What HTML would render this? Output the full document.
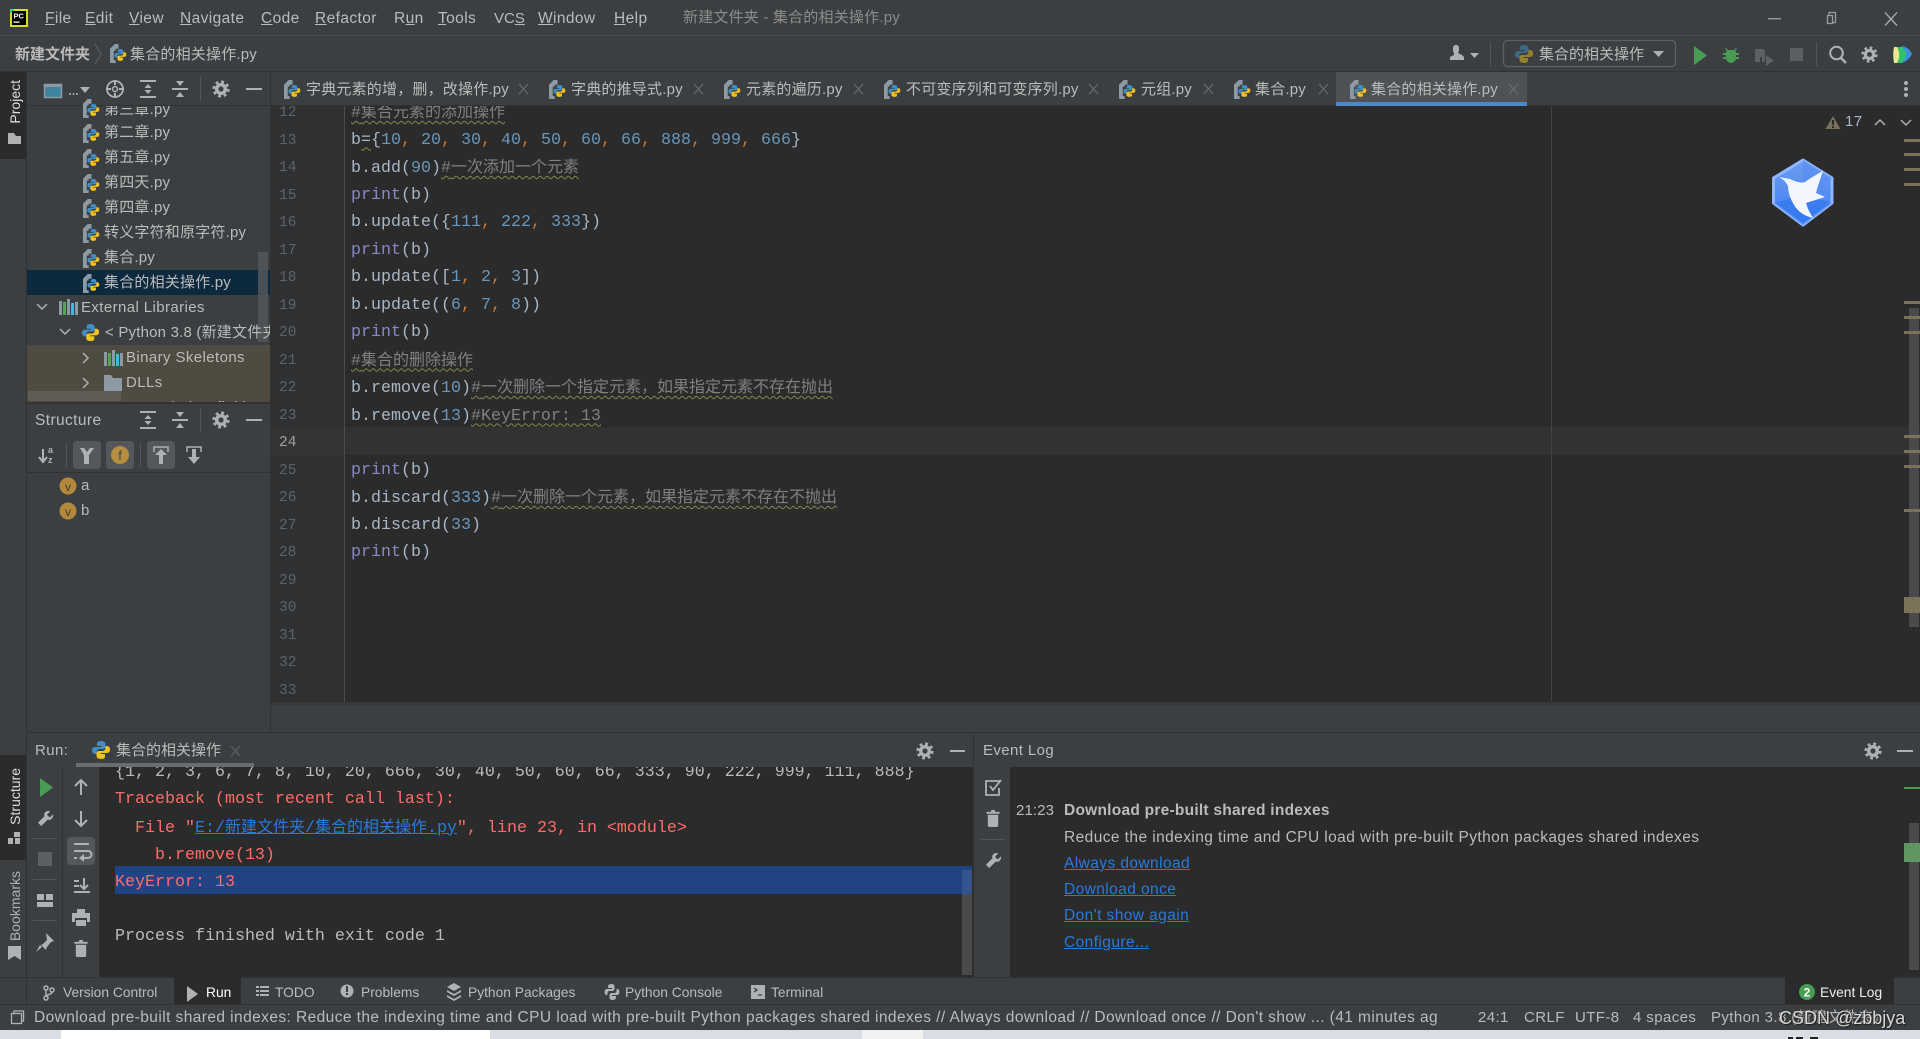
<!DOCTYPE html>
<html><head><meta charset="utf-8"><title>PyCharm</title>
<style>
html,body{margin:0;padding:0;width:1920px;height:1039px;overflow:hidden;background:#3c3f41}
body{position:relative;font-family:"Liberation Sans","Noto Sans CJK SC",sans-serif;font-size:15px;color:#bbb}
.b{position:absolute}
.a{position:absolute;white-space:nowrap;line-height:20px;margin-top:-10px;letter-spacing:.4px}
.u{font-size:15.5px}
.w{font-size:15.5px;letter-spacing:.42px}
.g{font-size:13.8px;letter-spacing:0}
.m{position:absolute;white-space:nowrap;line-height:20px;margin-top:-10px;font-family:"Liberation Mono","Noto Sans CJK SC",monospace;font-size:16.67px;color:#a9b7c6}
.c{color:#808080;text-decoration:underline wavy #85854f 1px;text-underline-offset:3px;font-size:16px}
.c i{font-style:normal;font-size:16.67px}
.n{color:#6897bb}.o{color:#cc7832}.p{color:#8888c6}
.l{font-family:"Liberation Mono",monospace;font-size:14.5px;color:#606366;left:279px;position:absolute;line-height:20px;margin-top:-10px}
.t{font-size:15px;letter-spacing:.2px}
.r{font-family:"Liberation Mono","Noto Sans CJK SC",monospace;font-size:16.67px;color:#ff6b68;position:absolute;white-space:pre;line-height:20px;margin-top:-10px}
.lk{color:#287bde;text-decoration:underline}
.lk i{font-style:normal;font-size:16px}
.e{left:1064px;color:#287bde;text-decoration:underline;font-size:15.5px;letter-spacing:.42px}
.v{position:absolute;writing-mode:vertical-rl;transform:rotate(180deg);white-space:nowrap;font-size:14px;line-height:16px}
svg{position:absolute;left:0;top:0}
</style></head><body>

<!-- panels -->
<div class="b" style="left:0;top:35px;width:1920px;height:1px;background:#4c4f51"></div>
<div class="b" style="left:0;top:71px;width:1920px;height:1px;background:#323232"></div>
<div class="b" style="left:0;top:105px;width:1920px;height:1px;background:#323232"></div>
<div class="b" style="left:0;top:72px;width:27px;height:87px;background:#2b2b2b"></div>
<div class="b" style="left:0;top:755px;width:27px;height:105px;background:#2b2b2b"></div>
<div class="b" style="left:26px;top:72px;width:1px;height:933px;background:#323232"></div>
<div class="b" style="left:270px;top:72px;width:1px;height:660px;background:#323232"></div>
<div class="b" style="left:1336px;top:72px;width:191px;height:34px;background:#4e5254"></div>
<div class="b" style="left:1336px;top:102px;width:191px;height:4px;background:#4a88c7"></div>
<div class="b" style="left:27px;top:270px;width:243px;height:25px;background:#0d293e"></div>
<div class="b" style="left:27px;top:345px;width:243px;height:57px;background:#4f4b41"></div>
<div class="b" style="left:28px;top:391px;width:93px;height:10px;background:#5f5c53"></div>
<div class="b" style="left:258px;top:252px;width:10px;height:90px;background:#53575a;opacity:.85"></div>
<div class="b" style="left:27px;top:402px;width:243px;height:2px;background:#323232"></div>
<div class="b" style="left:27px;top:472px;width:243px;height:1px;background:#323232"></div>

<!-- editor -->
<div class="b" style="left:271px;top:106px;width:1649px;height:596px;background:#2b2b2b"></div>
<div class="b" style="left:271px;top:106px;width:73px;height:596px;background:#2f3031"></div>
<div class="b" style="left:344px;top:106px;width:1px;height:596px;background:#4a4c4e"></div>
<div class="b" style="left:345px;top:427px;width:1575px;height:28px;background:#323232"></div>
<div class="b" style="left:271px;top:427px;width:73px;height:28px;background:#333435"></div>
<div class="b" style="left:1551px;top:106px;width:1px;height:596px;background:#444"></div>
<div class="b" style="left:271px;top:702px;width:1649px;height:3px;background:#373839"></div>
<div class="b" style="left:27px;top:732px;width:1893px;height:1px;background:#323232"></div>

<div class="b" style="left:0;top:106px;width:1920px;height:596px;overflow:hidden">
<div class="b" style="left:0;top:1px;width:1920px;height:596px">
<div class="l" style="top:6px">12</div><div class="l" style="top:33.5px">13</div><div class="l" style="top:61px">14</div><div class="l" style="top:88.5px">15</div><div class="l" style="top:116px">16</div><div class="l" style="top:143.5px">17</div><div class="l" style="top:171px">18</div><div class="l" style="top:198.5px">19</div><div class="l" style="top:226px">20</div><div class="l" style="top:253.5px">21</div><div class="l" style="top:281px">22</div><div class="l" style="top:308.5px">23</div><div class="l" style="top:336px;color:#a4a3a3">24</div><div class="l" style="top:363.5px">25</div><div class="l" style="top:391px">26</div><div class="l" style="top:418.5px">27</div><div class="l" style="top:446px">28</div><div class="l" style="top:473.5px">29</div><div class="l" style="top:501px">30</div><div class="l" style="top:528.5px">31</div><div class="l" style="top:556px">32</div><div class="l" style="top:583.5px">33</div>
<div class="m" style="left:351px;top:6px"><span class="c"><i>#</i>集合元素的添加操作</span></div>
<div class="m" style="left:351px;top:33.5px">b<span style="text-decoration:underline wavy #85854f 1px;text-underline-offset:3px">=</span>{<span class="n">10</span><span class="o">,</span> <span class="n">20</span><span class="o">,</span> <span class="n">30</span><span class="o">,</span> <span class="n">40</span><span class="o">,</span> <span class="n">50</span><span class="o">,</span> <span class="n">60</span><span class="o">,</span> <span class="n">66</span><span class="o">,</span> <span class="n">888</span><span class="o">,</span> <span class="n">999</span><span class="o">,</span> <span class="n">666</span>}</div>
<div class="m" style="left:351px;top:61px">b.add(<span class="n">90</span>)<span class="c"><i>#</i>一次添加一个元素</span></div>
<div class="m" style="left:351px;top:88.5px"><span class="p">print</span>(b)</div>
<div class="m" style="left:351px;top:116px">b.update({<span class="n">111</span><span class="o">,</span> <span class="n">222</span><span class="o">,</span> <span class="n">333</span>})</div>
<div class="m" style="left:351px;top:143.5px"><span class="p">print</span>(b)</div>
<div class="m" style="left:351px;top:171px">b.update([<span class="n">1</span><span class="o">,</span> <span class="n">2</span><span class="o">,</span> <span class="n">3</span>])</div>
<div class="m" style="left:351px;top:198.5px">b.update((<span class="n">6</span><span class="o">,</span> <span class="n">7</span><span class="o">,</span> <span class="n">8</span>))</div>
<div class="m" style="left:351px;top:226px"><span class="p">print</span>(b)</div>
<div class="m" style="left:351px;top:253.5px"><span class="c"><i>#</i>集合的删除操作</span></div>
<div class="m" style="left:351px;top:281px">b.remove(<span class="n">10</span>)<span class="c"><i>#</i>一次删除一个指定元素，如果指定元素不存在抛出</span></div>
<div class="m" style="left:351px;top:308.5px">b.remove(<span class="n">13</span>)<span class="c"><i>#KeyError: 13</i></span></div>
<div class="m" style="left:351px;top:363.5px"><span class="p">print</span>(b)</div>
<div class="m" style="left:351px;top:391px">b.discard(<span class="n">333</span>)<span class="c"><i>#</i>一次删除一个元素，如果指定元素不存在不抛出</span></div>
<div class="m" style="left:351px;top:418.5px">b.discard(<span class="n">33</span>)</div>
<div class="m" style="left:351px;top:446px"><span class="p">print</span>(b)</div>
</div>
</div>

<!-- editor stripe -->
<div class="b" style="left:1909px;top:308px;width:10px;height:319px;background:#4a4a4a"></div>
<div class="b" style="left:1904px;top:139px;width:16px;height:3px;background:#7c7259"></div>
<div class="b" style="left:1904px;top:153px;width:16px;height:3px;background:#7c7259"></div>
<div class="b" style="left:1904px;top:168px;width:16px;height:3px;background:#7c7259"></div>
<div class="b" style="left:1904px;top:183px;width:16px;height:3px;background:#7c7259"></div>
<div class="b" style="left:1904px;top:301px;width:16px;height:3px;background:#7c7259"></div>
<div class="b" style="left:1904px;top:316px;width:16px;height:3px;background:#7c7259"></div>
<div class="b" style="left:1904px;top:331px;width:16px;height:3px;background:#7c7259"></div>
<div class="b" style="left:1904px;top:435px;width:16px;height:3px;background:#7c7259"></div>
<div class="b" style="left:1904px;top:450px;width:16px;height:3px;background:#7c7259"></div>
<div class="b" style="left:1904px;top:465px;width:16px;height:3px;background:#7c7259"></div>
<div class="b" style="left:1904px;top:509px;width:16px;height:3px;background:#7c7259"></div>
<div class="b" style="left:1904px;top:597px;width:16px;height:16px;background:#7c7259"></div>

<!-- bottom panels -->
<div class="b" style="left:100px;top:767px;width:873px;height:210px;background:#2b2b2b"></div>
<div class="b" style="left:62px;top:767px;width:1px;height:210px;background:#323232"></div>
<div class="b" style="left:99px;top:767px;width:1px;height:210px;background:#323232"></div>
<div class="b" style="left:115px;top:866px;width:857px;height:28px;background:#214283"></div>
<div class="b" style="left:962px;top:870px;width:10px;height:105px;background:#4a4a4a"></div>
<div class="b" style="left:962px;top:870px;width:10px;height:24px;background:#33548f"></div>
<div class="b" style="left:973px;top:733px;width:1px;height:244px;background:#323232"></div>
<div class="b" style="left:1010px;top:767px;width:910px;height:210px;background:#2b2b2b"></div>
<div class="b" style="left:76px;top:763px;width:178px;height:4px;background:#6a6d70"></div>
<div class="b" style="left:1909px;top:823px;width:10px;height:147px;background:#4a4a4a"></div>
<div class="b" style="left:1904px;top:787px;width:16px;height:2px;background:#499c54"></div>
<div class="b" style="left:1904px;top:843px;width:16px;height:19px;background:#60965f"></div>
<div class="b" style="left:0;top:977px;width:1920px;height:1px;background:#323232"></div>
<div class="b" style="left:174px;top:977px;width:67px;height:27px;background:#2b2b2b"></div>
<div class="b" style="left:1785px;top:977px;width:109px;height:27px;background:#2b2b2b"></div>
<div class="b" style="left:0;top:1004px;width:1920px;height:1px;background:#323232"></div>
<div class="b" style="left:0;top:1030px;width:1920px;height:9px;background:#d9dde4"></div>
<div class="b" style="left:61px;top:1030px;width:429px;height:9px;background:#fff"></div>
<div class="b" style="left:862px;top:1030px;width:61px;height:9px;background:#f0f1f3"></div>
<div class="b" style="left:1788px;top:1037px;width:5px;height:2px;background:#222"></div>
<div class="b" style="left:1796px;top:1037px;width:7px;height:2px;background:#222"></div>
<div class="b" style="left:1810px;top:1037px;width:8px;height:2px;background:#222"></div>
<div class="b" style="left:67px;top:837px;width:28px;height:28px;background:#55585a;border-radius:4px"></div>
<div class="b" style="left:73px;top:441px;width:28px;height:28px;background:#55585a;border-radius:4px"></div>
<div class="b" style="left:106px;top:441px;width:28px;height:28px;background:#55585a;border-radius:4px"></div>
<div class="b" style="left:147px;top:441px;width:28px;height:28px;background:#55585a;border-radius:4px"></div>

<!-- icons -->
<svg width="1920" height="1039" viewBox="0 0 1920 1039">
<defs>
<symbol id="py" viewBox="0 0 20 20"><path fill="#3f8fc4" d="M10 1C6 1 6 2.7 6 4v2h4.2v1H4.2C2 7 1 8.5 1 10.5S2 14 4 14h1.6v-2.3c0-1.6 1.2-2.7 2.8-2.7h4c1.2 0 2.1-1 2.1-2.2V4c0-1.6-1.6-3-4.5-3z"/><path fill="#f2c31c" d="M10 19c4 0 4-1.700 4-3v-2H9.800v-1h6C18 13 19 11.500 19 9.500S18 6 16 6h-1.600v2.300c0 1.600-1.200 2.700-2.800 2.700h-4c-1.200 0-2.100 1-2.100 2.200V16c0 1.600 1.600 3 4.500 3z"/></symbol>
<symbol id="pf" viewBox="0 0 18 20"><path fill="#8d9aa3" d="M5 0h4v5H6v2H4v10h2v3H0V5z"/><use href="#py" x="4" y="4" width="14" height="15"/></symbol>
<symbol id="gear" viewBox="0 0 18 18"><circle cx="9" cy="9" r="6" fill="#afb1b3"/><circle cx="9" cy="9" r="7.200" fill="none" stroke="#afb1b3" stroke-width="2.800" stroke-dasharray="2.800 2.850"/><circle cx="9" cy="9" r="2.600" fill="#3c3f41"/></symbol>
<symbol id="exp" viewBox="0 0 16 18"><path fill="#afb1b3" d="M0 0h16v2H0zM0 16h16v2H0zM8 4l3.500 4h-7zM8 14l-3.500-4h7z"/></symbol>
<symbol id="col" viewBox="0 0 16 18"><path fill="#afb1b3" d="M0 8h16v2H0zM4 1h8l-4 5zM4 17h8l-4-5z"/></symbol>
<symbol id="wr" viewBox="0 0 18 18"><path fill="#afb1b3" d="M17 4.500 13.500 8 10.500 5 14 1.500c-2.500-1-5 0-6 2-.5 1-.5 2.200-.2 3.200L1 13.500 4.500 17l6.800-6.800c1 .3 2.200.3 3.200-.2 2-1 3-3.500 2.500-5.500z"/></symbol>
<symbol id="tr" viewBox="0 0 14 18"><path fill="#afb1b3" d="M5 0h4v2h5v2H0V2h5zM1.500 5h11v12l-1 1h-9l-1-1z"/></symbol>
</defs>

<!-- app logo -->
<rect x="10" y="9" width="18" height="18" fill="#d5df21"/><rect x="10" y="9" width="4" height="4" fill="#3cd47a"/>
<rect x="12" y="11" width="14" height="14" fill="#000"/>
<text x="13.500" y="18.500" font-family="Liberation Sans" font-size="7.500" font-weight="bold" fill="#fff">PC</text>
<rect x="13.500" y="21.500" width="6" height="1.300" fill="#fff"/>

<!-- window controls -->
<rect x="1768" y="18" width="13" height="1.400" fill="#999"/>
<path fill="none" stroke="#999" stroke-width="1.300" d="M1829 15.500v-3h6.500v10h-3M1827.500 15.500h5v8h-5z"/>
<path fill="none" stroke="#aaa" stroke-width="1.300" d="M1885 12.500l12 13M1897 12.500l-12 13"/>

<!-- breadcrumb -->
<path fill="none" stroke="#5a5d5f" stroke-width="1.200" d="M95 44l6 10-6 10"/>
<use href="#pf" x="110" y="44" width="17" height="19"/>

<!-- right toolbar -->
<path fill="#afb1b3" d="M1450 60v-3l4-2v-2c-1-1-1-2-1-4 0-3 1-4 3-4s3 1 3 4c0 1 0 2-.5 3l-.5 1 4 2 2 2v3z"/>
<path fill="#afb1b3" d="M1470 53h9l-4.500 5z"/>
<rect x="1490" y="42" width="1" height="24" fill="#515658"/>
<rect x="1503.500" y="40.500" width="172" height="26" rx="4" fill="none" stroke="#5e6060" stroke-width="1.300"/>
<use href="#py" x="1514" y="44" width="20" height="20" opacity=".5"/>
<path fill="#afb1b3" d="M1653 51h11l-5.500 6z"/>
<path fill="#499c54" d="M1694 46v19l13-9.500z"/>
<path fill="#499c54" d="M1726 48l2 2h6l2-2 1 1-2 2 1 1v1h3v2h-3v2h3v2h-3l-1 2-3 2h-2l-3-2-1-2h-3v-2h3v-2h-3v-2h3v-1l1-1-2-2z"/>
<path fill="#5d6062" d="M1755 49h8l2 2v11h-3v-5h-2v5h-5z"/><path fill="#5d6062" d="M1766 55v11l8-5.500z"/>
<rect x="1790" y="48" width="13" height="13" fill="#5d6062"/>
<rect x="1816" y="42" width="1" height="24" fill="#515658"/>
<circle cx="1836.500" cy="53" r="6.300" fill="none" stroke="#afb1b3" stroke-width="2"/><path stroke="#afb1b3" stroke-width="2.400" d="M1841 58l5 5"/>
<use href="#gear" x="1861" y="46" width="17" height="17"/>
<path fill="#3d8fe0" d="M1902 46c5 1 8 4 10 8-2 4-5 7-10 9z"/><path fill="#30c36b" d="M1897 47h5c3 3 4 5 4 7 0 3-2 6-4 9h-5c2-5 3-11 0-16z"/><path fill="#e8e890" d="M1894 47h3c3 5 3 11 0 16h-3c-1-5-1-11 0-16z"/>

<!-- tabs -->
<use href="#pf" x="284" y="80" width="17" height="19"/><use href="#pf" x="549" y="80" width="17" height="19"/><use href="#pf" x="724" y="80" width="17" height="19"/><use href="#pf" x="884" y="80" width="17" height="19"/><use href="#pf" x="1119" y="80" width="17" height="19"/><use href="#pf" x="1234" y="80" width="17" height="19"/><use href="#pf" x="1350" y="80" width="17" height="19"/>
<g fill="none" stroke="#6a6c6e" stroke-width="1.200"><path d="M519 84l9 10M528 84l-9 10M694 84l9 10M703 84l-9 10M854 84l9 10M863 84l-9 10M1089 84l9 10M1098 84l-9 10M1204 84l9 10M1213 84l-9 10M1319 84l9 10M1328 84l-9 10M1509 84l9 10M1518 84l-9 10"/></g>
<circle cx="1906" cy="83" r="2" fill="#afb1b3"/><circle cx="1906" cy="89" r="2" fill="#afb1b3"/><circle cx="1906" cy="95" r="2" fill="#afb1b3"/>

<!-- left strip icons -->
<path fill="#afb1b3" d="M8 133h6l2 3h5v8H8z"/>
<path fill="#afb1b3" d="M8 838h5v6H8zM15 838h5v6h-5zM14 832h6v5h-6z"/>
<path fill="#afb1b3" d="M8 946h13v14l-6.500-4L8 960z"/>

<!-- project toolbar -->
<rect x="44.500" y="84.500" width="17" height="13" fill="#3e86a0" stroke="#8d9aa3" stroke-width="1.500"/>
<rect x="44" y="84" width="18" height="3" fill="#8d9aa3"/>
<g fill="#afb1b3"><circle cx="70" cy="94" r="1"/><circle cx="73.500" cy="94" r="1"/><circle cx="77" cy="94" r="1"/><path d="M80 87h10l-5 6z"/></g>
<circle cx="115" cy="89" r="8" fill="none" stroke="#afb1b3" stroke-width="1.800"/><circle cx="115" cy="89" r="2.500" fill="none" stroke="#afb1b3" stroke-width="1.500"/><path stroke="#afb1b3" stroke-width="2" d="M115 80v5M115 93v5M106 89h5M119 89h5"/>
<use href="#exp" x="140" y="80" width="16" height="18"/><use href="#col" x="172" y="80" width="16" height="18"/>
<rect x="200" y="77" width="1" height="24" fill="#515658"/>
<use href="#gear" x="212" y="80" width="18" height="18"/>
<rect x="246" y="88" width="16" height="2" fill="#afb1b3"/>

<!-- tree -->
<use href="#pf" x="83" y="99" width="17" height="19"/><use href="#pf" x="83" y="124" width="17" height="19"/><use href="#pf" x="83" y="149" width="17" height="19"/><use href="#pf" x="83" y="174" width="17" height="19"/><use href="#pf" x="83" y="199" width="17" height="19"/><use href="#pf" x="83" y="224" width="17" height="19"/><use href="#pf" x="83" y="249" width="17" height="19"/><use href="#pf" x="83" y="274" width="17" height="19"/>
<g fill="none" stroke="#afb1b3" stroke-width="1.500"><path d="M37 304l5 5 5-5M60 329l5 5 5-5M83 353l5 5-5 5M83 378l5 5-5 5"/></g>
<g><rect x="59" y="301" width="3" height="14" fill="#8d9aa3"/><rect x="63" y="302" width="3" height="13" fill="#55a556"/><rect x="67" y="299" width="3" height="16" fill="#8d9aa3"/><rect x="71" y="303" width="3" height="12" fill="#40b6e0"/><rect x="75" y="302" width="3" height="13" fill="#8d9aa3"/></g>
<use href="#py" x="81" y="323" width="19" height="19"/>
<g><rect x="104" y="352" width="3" height="14" fill="#8d9aa3"/><rect x="108" y="353" width="3" height="13" fill="#55a556"/><rect x="112" y="350" width="3" height="16" fill="#8d9aa3"/><rect x="116" y="354" width="3" height="12" fill="#40b6e0"/><rect x="120" y="353" width="3" height="13" fill="#8d9aa3"/></g>
<path fill="#8d9aa3" d="M104 375h7l2 3h9v13h-18z"/>

<!-- structure -->
<use href="#exp" x="140" y="411" width="16" height="18"/><use href="#col" x="172" y="411" width="16" height="18"/>
<rect x="200" y="408" width="1" height="24" fill="#515658"/>
<use href="#gear" x="212" y="411" width="18" height="18"/>
<rect x="246" y="419" width="16" height="2" fill="#afb1b3"/>
<path fill="none" stroke="#afb1b3" stroke-width="2" d="M43 449v12M39 457l4 5 4-5"/><text x="48" y="453" font-family="Liberation Sans" font-size="9" font-weight="bold" fill="#afb1b3">a</text><text x="48" y="463" font-family="Liberation Sans" font-size="9" font-weight="bold" fill="#afb1b3">z</text>
<rect x="66" y="443" width="1" height="24" fill="#515658"/><rect x="140" y="443" width="1" height="24" fill="#515658"/>
<path fill="#afb1b3" d="M80 448h4l3 4 3-4h4l-5 7v9h-5v-9z"/>
<circle cx="120" cy="455" r="9" fill="#b58e3f"/><text x="120" y="460" text-anchor="middle" font-family="Liberation Sans" font-size="13" fill="#3c3f41">f</text>
<path fill="none" stroke="#afb1b3" stroke-width="1.500" d="M154 452v-5h14v5"/><path fill="#afb1b3" d="M161 449l6 6h-4v9h-4v-9h-4z"/>
<path fill="none" stroke="#afb1b3" stroke-width="1.500" d="M187 452v-5h14v5"/><path fill="#afb1b3" d="M192 449h4v8h4l-6 7-6-7h4z"/>
<circle cx="68" cy="486" r="8.500" fill="#b4873a"/><text x="68" y="491" text-anchor="middle" font-family="Liberation Sans" font-size="12" fill="#3c3f41">v</text>
<circle cx="68" cy="511" r="8.500" fill="#b4873a"/><text x="68" y="516" text-anchor="middle" font-family="Liberation Sans" font-size="12" fill="#3c3f41">v</text>

<!-- warning -->
<path fill="#7a7059" d="M1833 116l7.500 13h-15z"/><rect x="1832" y="120" width="2" height="5" fill="#2b2b2b"/><rect x="1832" y="126" width="2" height="2" fill="#2b2b2b"/>
<path fill="none" stroke="#afb1b3" stroke-width="1.500" d="M1875 125l5-5 5 5M1901 120l5 5 5-5"/>

<!-- bird logo -->
<defs><linearGradient id="bl" x1="0" y1="0" x2="0" y2="1"><stop offset="0" stop-color="#6d9cf0"/><stop offset="1" stop-color="#3d80f5"/></linearGradient></defs>
<path fill="url(#bl)" stroke="#8fb6ff" stroke-width="3" stroke-linejoin="round" d="M1803 160l29 18v25l-29 22-29.500-22v-25z"/>
<path fill="#5a8ff2" d="M1803 160l29 18-29 18z" opacity=".7"/>
<path fill="#2f74ee" d="M1774 203l29-8 29 8-29 22z" opacity=".6"/>
<path fill="#f2f6ff" d="M1779 177L1790 179Q1800 184 1805 182Q1815 175 1823 171Q1818 185 1816 193L1825 197L1806 203Q1808 210 1813 218Q1800 215 1794 205Q1788 195 1788 186Q1785 180 1779 177Z"/>

<!-- run header -->
<use href="#py" x="91" y="740" width="20" height="20"/>
<path fill="none" stroke="#5f6163" stroke-width="1.200" d="M231 746l9 10M240 746l-9 10"/>
<use href="#gear" x="916" y="742" width="18" height="18"/>
<rect x="950" y="750" width="15" height="2" fill="#afb1b3"/>

<!-- run toolbar col1 -->
<path fill="#499c54" d="M40 778v19l13-9.500z"/>
<use href="#wr" x="37" y="810" width="17" height="17"/>
<rect x="33" y="838" width="24" height="1" fill="#515658"/><rect x="33" y="879" width="24" height="1" fill="#515658"/><rect x="33" y="920" width="24" height="1" fill="#515658"/>
<rect x="38" y="852" width="14" height="14" fill="#5d6062"/>
<path fill="#afb1b3" d="M37 894h7v6h-7zM46 894h7v6h-7zM37 902h16v5H37z"/>
<path fill="#afb1b3" d="M46 933l8 8-3 1-4 5-1 3-5-5 2-1 4-4zM40 945l2 2-6 5z"/>

<!-- run toolbar col2 -->
<path fill="none" stroke="#afb1b3" stroke-width="2" d="M81 795v-15M75 786l6-6 6 6M81 811v15M75 820l6 6 6-6"/>
<path fill="none" stroke="#afb1b3" stroke-width="2" d="M74 844h15M74 851h14a3 3 0 0 1 0 7h-6"/><path fill="#afb1b3" d="M84 854v8l-5-4zM74 857h3v2h-3z"/>
<path fill="#afb1b3" d="M74 880h5v2h-5zM74 885h5v2h-5zM74 891h16v2H74z"/><path fill="none" stroke="#afb1b3" stroke-width="2" d="M84 878v11M80 885l4 4 4-4"/>
<path fill="#afb1b3" d="M77 909h8v4h5v9h-3v-4H75v4h-3v-9h5zM76 920h10v6H76z"/>
<use href="#tr" x="74" y="940" width="14" height="17"/>

<!-- event log -->
<use href="#gear" x="1864" y="742" width="18" height="18"/>
<rect x="1897" y="750" width="16" height="2" fill="#afb1b3"/>
<path fill="none" stroke="#afb1b3" stroke-width="1.800" d="M1001 781h-15v14h13v-7"/><path fill="none" stroke="#afb1b3" stroke-width="1.800" d="M990 786l3 4 8-10"/>
<use href="#tr" x="986" y="810" width="14" height="17"/>
<rect x="981" y="839" width="24" height="1" fill="#515658"/>
<use href="#wr" x="985" y="852" width="17" height="17"/>

<!-- tool window bar -->
<g fill="none" stroke="#afb1b3" stroke-width="1.500"><circle cx="46" cy="988" r="2"/><circle cx="46" cy="998" r="2"/><circle cx="52" cy="990" r="2"/><path d="M46 990v6M52 992c0 3-6 2-6 5"/></g>
<path fill="#afb1b3" d="M187 986v16l11-8z"/>
<path fill="#afb1b3" d="M256 986h3v2h-3zM260 986h9v2h-9zM256 990h3v2h-3zM260 990h9v2h-9zM256 994h3v2h-3zM260 994h9v2h-9z"/>
<circle cx="347" cy="991" r="6.500" fill="#afb1b3"/><rect x="346" y="986" width="2" height="6" fill="#3c3f41"/><rect x="346" y="993" width="2" height="2" fill="#3c3f41"/>
<path fill="#afb1b3" d="M454 983l7 4-7 4-7-4zM447 990l7 4 7-4v2l-7 4-7-4zM447 995l7 4 7-4v2l-7 4-7-4z"/>
<path fill="#afb1b3" d="M612 984c-3 0-4 1-4 3v1h4v1h-5c-2 0-2.500 2-2.500 3s.5 3 2 3h1v-2c0-1 1-2 2-2h3c1 0 2-1 2-2v-2c0-2-1-3-2.500-3zM612 1000c3 0 4-1 4-3v-1h-4v-1h5c2 0 2.500-2 2.500-3s-.5-3-2-3h-1v2c0 1-1 2-2 2h-3c-1 0-2 1-2 2v2c0 2 1 3 2.500 3z"/>
<rect x="751" y="985" width="14" height="14" fill="#afb1b3"/><path fill="none" stroke="#3c3f41" stroke-width="1.300" d="M754 988l3 2-3 2M758 995h4"/>
<circle cx="1807" cy="992" r="8" fill="#499c54"/><text x="1807" y="996.500" text-anchor="middle" font-family="Liberation Sans" font-size="12" font-weight="bold" fill="#fff">2</text>

<!-- status -->
<rect x="11.500" y="1013.500" width="10" height="10" fill="none" stroke="#afb1b3" stroke-width="1.300"/><path fill="none" stroke="#afb1b3" stroke-width="1.300" d="M14 1013v-2h9.500v10H22"/>
</svg>

<!-- menu -->
<div class="a u" style="left:45px;top:19px"><u>F</u>ile</div>
<div class="a u" style="left:85px;top:19px"><u>E</u>dit</div>
<div class="a u" style="left:129px;top:19px"><u>V</u>iew</div>
<div class="a u" style="left:180px;top:19px"><u>N</u>avigate</div>
<div class="a u" style="left:261px;top:19px"><u>C</u>ode</div>
<div class="a u" style="left:315px;top:19px"><u>R</u>efactor</div>
<div class="a u" style="left:394px;top:19px">R<u>u</u>n</div>
<div class="a u" style="left:438px;top:19px"><u>T</u>ools</div>
<div class="a" style="left:494px;top:19px;letter-spacing:0;font-size:15px">VC<u>S</u></div>
<div class="a u" style="left:538px;top:19px"><u>W</u>indow</div>
<div class="a u" style="left:614px;top:19px"><u>H</u>elp</div>
<div class="a t" style="left:683px;top:18px;color:#8c8c8c">新建文件夹 - 集合的相关操作.py</div>

<div class="a t" style="left:15px;top:55px;font-weight:bold;letter-spacing:0">新建文件夹</div>
<div class="a t" style="left:130px;top:55px">集合的相关操作.py</div>

<div class="a t" style="left:1539px;top:55px;letter-spacing:0">集合的相关操作</div>

<!-- tabs -->
<div class="a t" style="left:306px;top:90px">字典元素的增，删，改操作.py</div>
<div class="a t" style="left:571px;top:90px">字典的推导式.py</div>
<div class="a t" style="left:746px;top:90px">元素的遍历.py</div>
<div class="a t" style="left:906px;top:90px">不可变序列和可变序列.py</div>
<div class="a t" style="left:1141px;top:90px">元组.py</div>
<div class="a t" style="left:1255px;top:90px">集合.py</div>
<div class="a t" style="left:1371px;top:90px">集合的相关操作.py</div>

<!-- strip labels -->
<div class="v" style="left:7px;top:80px;color:#dfdfdf">Project</div>
<div class="v" style="left:7px;top:768px;color:#dfdfdf">Structure</div>
<div class="v" style="left:7px;top:871px;color:#afb1b3">Bookmarks</div>

<!-- tree -->
<div class="b" style="left:27px;top:106px;width:243px;height:296px;overflow:hidden">
<div class="a t" style="left:77px;top:4px">第三章.py</div>
<div class="a t" style="left:77px;top:27px">第二章.py</div>
<div class="a t" style="left:77px;top:52px">第五章.py</div>
<div class="a t" style="left:77px;top:77px">第四天.py</div>
<div class="a t" style="left:77px;top:102px">第四章.py</div>
<div class="a t" style="left:77px;top:127px">转义字符和原字符.py</div>
<div class="a t" style="left:77px;top:152px">集合.py</div>
<div class="a t" style="left:77px;top:177px">集合的相关操作.py</div>
<div class="a" style="left:54px;top:202px">External Libraries</div>
<div class="a" style="left:78px;top:227px;letter-spacing:.2px">&lt; Python 3.8 (新建文件夹)</div>
<div class="a" style="left:99px;top:252px">Binary Skeletons</div>
<div class="a" style="left:99px;top:277px">DLLs</div>
<div class="a" style="left:99px;top:302px">Extended Definitions</div>
</div>

<div class="a u" style="left:35px;top:421px">Structure</div>
<div class="a" style="left:81px;top:486px">a</div>
<div class="a" style="left:81px;top:511px">b</div>

<!-- run -->
<div class="a" style="left:35px;top:751px">Run:</div>
<div class="a t" style="left:116px;top:751px;letter-spacing:0">集合的相关操作</div>
<div class="b" style="left:100px;top:767px;width:862px;height:210px;overflow:hidden">
<div class="r" style="left:15px;top:6px;color:#bbb">{1, 2, 3, 6, 7, 8, 10, 20, 666, 30, 40, 50, 60, 66, 333, 90, 222, 999, 111, 888}</div>
<div class="r" style="left:15px;top:33px">Traceback (most recent call last):</div>
<div class="r" style="left:15px;top:60.5px">  File "<span class="lk">E:/<i>新建文件夹</i>/<i>集合的相关操作</i>.py</span>", line 23, in &lt;module&gt;</div>
<div class="r" style="left:15px;top:88.5px">    b.remove(13)</div>
<div class="r" style="left:15px;top:115.5px">KeyError: 13</div>
<div class="r" style="left:15px;top:170px;color:#bbb">Process finished with exit code 1</div>
</div>

<!-- event log -->
<div class="a" style="left:983px;top:751px">Event Log</div>
<div class="a" style="left:1016px;top:811px;letter-spacing:.1px">21:23</div>
<div class="a w" style="left:1064px;top:811px;font-weight:bold;letter-spacing:.25px">Download pre-built shared indexes</div>
<div class="a w" style="left:1064px;top:838px">Reduce the indexing time and CPU load with pre-built Python packages shared indexes</div>
<div class="a e" style="top:864px">Always download</div>
<div class="a e" style="top:890px">Download once</div>
<div class="a e" style="top:916px">Don't show again</div>
<div class="a e" style="top:943px">Configure...</div>

<!-- tool window labels -->
<div class="a g" style="left:63px;top:993px">Version Control</div>
<div class="a g" style="left:206px;top:993px;color:#fff">Run</div>
<div class="a g" style="left:275px;top:993px">TODO</div>
<div class="a g" style="left:361px;top:993px">Problems</div>
<div class="a g" style="left:468px;top:993px">Python Packages</div>
<div class="a g" style="left:625px;top:993px">Python Console</div>
<div class="a g" style="left:771px;top:993px">Terminal</div>
<div class="a g" style="left:1820px;top:993px;color:#eee">Event Log</div>

<!-- warning count -->
<div class="a" style="left:1845px;top:122px;color:#a9b7c6;font-size:15px">17</div>

<!-- status -->
<div class="a w" style="left:34px;top:1018px;width:1403px;overflow:hidden">Download pre-built shared indexes: Reduce the indexing time and CPU load with pre-built Python packages shared indexes // Always download // Download once // Don't show ... (41 minutes ag</div>
<div class="a" style="left:1478px;top:1018px">24:1</div>
<div class="a" style="left:1524px;top:1018px">CRLF</div>
<div class="a" style="left:1575px;top:1018px">UTF-8</div>
<div class="a" style="left:1633px;top:1018px">4 spaces</div>
<div class="a" style="left:1711px;top:1018px">Python 3.8 (新建文件夹)</div>
<div class="a" style="left:1779px;top:1018px;font-size:18px;color:#d8d8d8;text-shadow:0 0 2px #222,1px 1px 1px #222;letter-spacing:0">CSDN @zbbjya</div>

</body></html>
